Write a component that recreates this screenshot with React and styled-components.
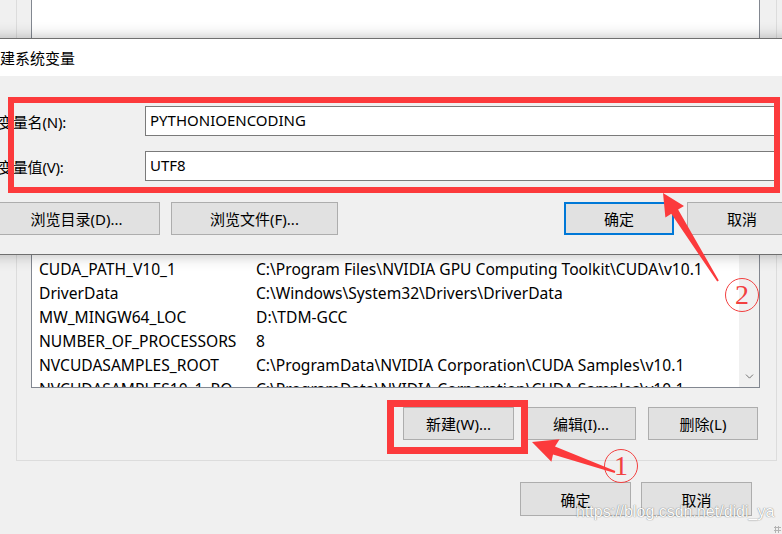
import React from 'react';
import styled, { createGlobalStyle } from 'styled-components';
import { ChevronDown } from 'lucide-react';

const GlobalStyle = createGlobalStyle`
  html, body {
    margin: 0;
    padding: 0;
    background: #f0f0f0;
  }
  body {
    font-family: "Noto Sans", "Noto Sans CJK SC", sans-serif;
    color: #000;
  }
`;

const rows = [
  { name: '', value: '' },
  { name: '', value: '' },
  { name: '', value: '' },
  { name: '', value: '' },
  { name: '', value: '' },
  { name: '', value: '' },
  { name: '', value: '' },
  { name: '', value: '' },
  { name: '', value: '' },
  { name: '', value: '' },
  { name: 'ComSpec', value: 'C:\\Windows\\system32\\cmd.exe' },
  { name: 'CUDA_PATH', value: 'C:\\Program Files\\NVIDIA GPU Computing Toolkit\\CUDA\\v10.1' },
  { name: 'CUDA_PATH_V10_1', value: 'C:\\Program Files\\NVIDIA GPU Computing Toolkit\\CUDA\\v10.1' },
  { name: 'DriverData', value: 'C:\\Windows\\System32\\Drivers\\DriverData' },
  { name: 'MW_MINGW64_LOC', value: 'D:\\TDM-GCC' },
  { name: 'NUMBER_OF_PROCESSORS', value: '8' },
  { name: 'NVCUDASAMPLES_ROOT', value: 'C:\\ProgramData\\NVIDIA Corporation\\CUDA Samples\\v10.1' },
  { name: 'NVCUDASAMPLES10_1_RO...', value: 'C:\\ProgramData\\NVIDIA Corporation\\CUDA Samples\\v10.1' },
];

const Page = styled.div`
  position: relative;
  width: 782px;
  height: 534px;
  overflow: hidden;
  background: #f0f0f0;
`;

/* ---------- window behind ---------- */

const GroupBox = styled.div`
  margin: -40px 5px 0 16px;
  border: 1px solid #dcdcdc;
  padding: 8px 16px 20px 14px;
`;

const VarList = styled.div`
  height: 417px;
  border: 1px solid #828790;
  background: #fff;
  display: flex;
  overflow: hidden;
`;

const Rows = styled.div`
  flex: 1;
  min-width: 0;
`;

const Row = styled.div`
  display: grid;
  grid-template-columns: 217px 1fr;
  height: 24px;
  line-height: 23px;
  padding-left: 7px;
  font-size: 15.6px;
  white-space: nowrap;
  overflow: hidden;
`;

const Cell = styled.span`
  overflow: hidden;
`;

const ScrollTrack = styled.div`
  width: 20px;
  margin-top: 70px;
  background: #f0f0f0;
  display: flex;
  flex-direction: column;
  justify-content: flex-end;
`;

const ScrollArrow = styled.div`
  height: 21px;
  display: flex;
  align-items: center;
  justify-content: center;
  color: #606060;
`;

const ButtonRow = styled.div`
  display: flex;
  justify-content: flex-end;
  gap: 12px;
  margin: 19px 2px 0 0;
`;

const Footer = styled.div`
  display: flex;
  justify-content: flex-end;
  gap: 10px;
  margin-top: 21px;
  padding-right: 30px;
`;

const Button = styled.button`
  box-sizing: border-box;
  width: ${({ $w }) => $w || 110}px;
  height: ${({ $h }) => $h || 33}px;
  flex: none;
  background: #e1e1e1;
  border: ${({ $primary }) => ($primary ? '2px solid #0078d7' : '1px solid #adadad')};
  font-family: "Noto Sans", "Noto Sans CJK SC", sans-serif;
  font-size: 15px;
  color: #000;
  padding: 0;
  margin-left: ${({ $ml }) => $ml || 0}px;
`;

/* ---------- dialog on top ---------- */

const Dialog = styled.div`
  position: absolute;
  top: 38px;
  left: -25px;
  width: 840px;
  border: 1px solid #6f6f6f;
  box-shadow: 0 0 14px rgba(0, 0, 0, 0.28);
  background: #f0f0f0;
`;

const TitleBar = styled.div`
  height: 37px;
  line-height: 37px;
  background: #fff;
  padding-left: 9px;
  font-family: "Noto Sans CJK SC", sans-serif;
  font-size: 15px;
`;

const DialogBody = styled.div`
  padding: 30px 0 19px 22px;
`;

const Field = styled.div`
  display: flex;
  align-items: center;
  & + & {
    margin-top: 15px;
  }
`;

const Label = styled.label`
  width: 147px;
  flex: none;
  font-size: 15px;
  letter-spacing: -0.2px;
`;

const TextBox = styled.div`
  box-sizing: border-box;
  width: 632px;
  height: 30px;
  line-height: 27px;
  padding: 0 4px;
  border: 1px solid #7a7a7a;
  background: #fff;
  font-size: 15px;
`;

const DialogActions = styled.div`
  display: flex;
  gap: 11px;
  margin: 21px 0 0 -5px;
`;

/* ---------- annotations ---------- */

const Marks = styled.svg`
  position: absolute;
  inset: 0;
  pointer-events: none;
`;

const Highlight = styled.div`
  position: absolute;
  left: ${({ $x }) => $x}px;
  top: ${({ $y }) => $y}px;
  width: ${({ $w }) => $w}px;
  height: ${({ $h }) => $h}px;
  box-sizing: border-box;
  border: ${({ $t }) => $t}px solid #fc3a3c;
  pointer-events: none;
`;

const StepBadge = styled.span`
  position: absolute;
  left: ${({ $x }) => $x}px;
  top: ${({ $y }) => $y}px;
  width: 34px;
  height: 34px;
  box-sizing: border-box;
  border: 1.5px solid #f24040;
  border-radius: 50%;
  display: flex;
  align-items: center;
  justify-content: center;
  font-family: "Liberation Serif", serif;
  font-size: 28px;
  line-height: 1;
  color: #f24040;
`;

const Watermark = styled.span`
  position: absolute;
  left: 576px;
  top: 503px;
  font-family: "Liberation Sans", Arial, sans-serif;
  font-size: 16px;
  color: #fff;
  text-shadow: 0 0 1px rgba(80, 80, 80, 0.7), 0 0 1px rgba(80, 80, 80, 0.5);
  opacity: 0.9;
  white-space: nowrap;
`;

const Grip = styled.span`
  position: absolute;
  right: 1px;
  bottom: 1px;
  width: 7px;
  height: 7px;
  background: radial-gradient(circle, #b4b4b4 1px, transparent 1.2px) 0 0 / 3px 3px;
`;

export default function App() {
  return (
    <>
      <GlobalStyle />
      <Page>
        <GroupBox>
          <VarList>
            <Rows>
              {rows.map((r, i) => (
                <Row key={i}>
                  <Cell>{r.name}</Cell>
                  <Cell>{r.value}</Cell>
                </Row>
              ))}
            </Rows>
            <ScrollTrack>
              <ScrollArrow>
                <ChevronDown size={13} strokeWidth={1.6} />
              </ScrollArrow>
            </ScrollTrack>
          </VarList>
          <ButtonRow>
            <Button $w={111}>新建(W)...</Button>
            <Button>编辑(I)...</Button>
            <Button>删除(L)</Button>
          </ButtonRow>
        </GroupBox>
        <Footer>
          <Button $w={111} $h={34}>确定</Button>
          <Button $w={111} $h={34}>取消</Button>
        </Footer>

        <Dialog>
          <TitleBar>新建系统变量</TitleBar>
          <DialogBody>
            <Field>
              <Label>变量名(N):</Label>
              <TextBox>PYTHONIOENCODING</TextBox>
            </Field>
            <Field>
              <Label>变量值(V):</Label>
              <TextBox>UTF8</TextBox>
            </Field>
            <DialogActions>
              <Button $w={167}>浏览目录(D)...</Button>
              <Button $w={167}>浏览文件(F)...</Button>
              <Button $primary $ml={215}>确定</Button>
              <Button $ml={2}>取消</Button>
            </DialogActions>
          </DialogBody>
        </Dialog>

        <Highlight $x={8} $y={97} $w={772} $h={96} $t={6} />
        <Highlight $x={387} $y={400} $w={141} $h={54} $t={7} />

        <Marks width="782" height="534" viewBox="0 0 782 534">
          <polygon
            fill="#fc3a3c"
            points="663,193 684,205.9 678.1,209.6 718.8,280.5 717.2,281.5 671.3,213.8 665.4,217.5"
          />
          <polygon
            fill="#fc3a3c"
            points="532,442 559.6,439.2 555,446.5 615.3,471 614.7,473 553,454.5 551.4,461.8"
          />
        </Marks>
        <StepBadge $x={604} $y={449}>1</StepBadge>
        <StepBadge $x={725} $y={278}>2</StepBadge>

        <Watermark>https://blog.csdn.net/didi_ya</Watermark>
        <Grip />
      </Page>
    </>
  );
}
